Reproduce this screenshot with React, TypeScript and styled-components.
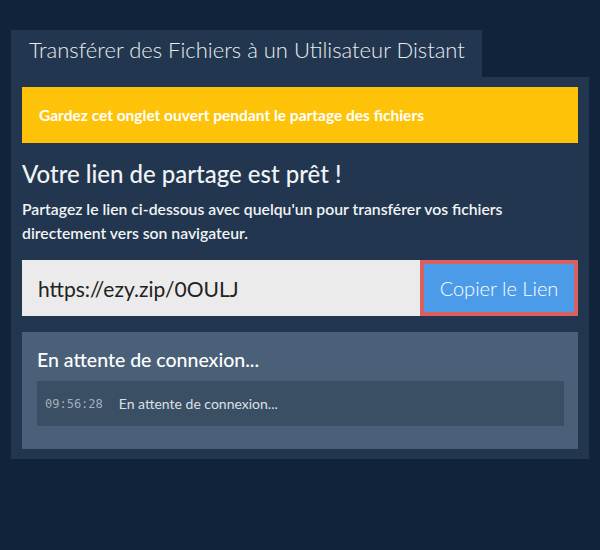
import styled, { createGlobalStyle } from 'styled-components';

const GlobalStyle = createGlobalStyle`
  html, body {
    margin: 0;
    padding: 0;
    background: #10233a;
    font-family: Lato, "Noto Sans", sans-serif;
  }
  * { box-sizing: border-box; }
`;

const Page = styled.div`
  width: 600px;
  height: 550px;
  padding: 30px 11px 0 11px;
`;

const Tab = styled.div`
  display: inline-block;
  background: #22374f;
  color: #e8ecf0;
  font-weight: 300;
  font-size: 22px;
  height: 47px;
  line-height: 40px;
  padding: 0 17px 0 18px;
`;

const Panel = styled.div`
  background: #22374f;
  padding: 10px 11px 10px 11px;
  display: flex;
  flex-direction: column;
`;

const Banner = styled.div`
  background: #fec309;
  color: #ffffff;
  font-weight: 700;
  font-size: 15.5px;
  height: 56px;
  display: flex;
  align-items: center;
  padding: 0 17px;
`;

const Heading = styled.h2`
  margin: 16px 0 0 0;
  color: #f1f3f5;
  font-size: 24px;
  font-weight: 500;
  line-height: 30px;
`;

const Text = styled.p`
  margin: 8px 0 0 0;
  max-width: 520px;
  color: #f1f3f5;
  font-size: 15.75px;
  font-weight: 600;
  line-height: 24px;
`;

const LinkRow = styled.div`
  display: flex;
  height: 56px;
  margin-top: 15px;
`;

const LinkInput = styled.div`
  flex: 1;
  background: #ebebeb;
  color: #222;
  font-size: 21px;
  display: flex;
  align-items: center;
  padding: 0 16px;
`;

const CopyButton = styled.button`
  width: 158px;
  background: #4c9be8;
  border: 4px solid #d9605e;
  color: #ffffff;
  font-family: Lato, sans-serif;
  font-weight: 300;
  font-size: 20px;
  padding: 0;
`;

const LogBox = styled.div`
  margin-top: 16px;
  background: #4a6078;
  padding: 16px 14px 23px 15px;
`;

const LogTitle = styled.h3`
  margin: 0;
  color: #ffffff;
  font-size: 19.5px;
  font-weight: 500;
  line-height: 24px;
`;

const LogRow = styled.div`
  margin-top: 9px;
  background: #3a4e64;
  height: 45px;
  display: flex;
  align-items: center;
  padding: 0 8px;
  gap: 16px;
`;

const Time = styled.span`
  font-family: "DejaVu Sans Mono", monospace;
  font-size: 12px;
  color: #a4aebb;
`;

const Message = styled.span`
  font-size: 14px;
  color: #dbe1e7;
`;

export default function App() {
  return (
    <>
      <GlobalStyle />
      <Page>
        <Tab>Transférer des Fichiers à un Utilisateur Distant</Tab>
        <Panel>
          <Banner>Gardez cet onglet ouvert pendant le partage des fichiers</Banner>
          <Heading>Votre lien de partage est prêt !</Heading>
          <Text>
            Partagez le lien ci-dessous avec quelqu'un pour transférer vos fichiers
            directement vers son navigateur.
          </Text>
          <LinkRow>
            <LinkInput>https://ezy.zip/0OULJ</LinkInput>
            <CopyButton>Copier le Lien</CopyButton>
          </LinkRow>
          <LogBox>
            <LogTitle>En attente de connexion...</LogTitle>
            <LogRow>
              <Time>09:56:28</Time>
              <Message>En attente de connexion...</Message>
            </LogRow>
          </LogBox>
        </Panel>
      </Page>
    </>
  );
}
